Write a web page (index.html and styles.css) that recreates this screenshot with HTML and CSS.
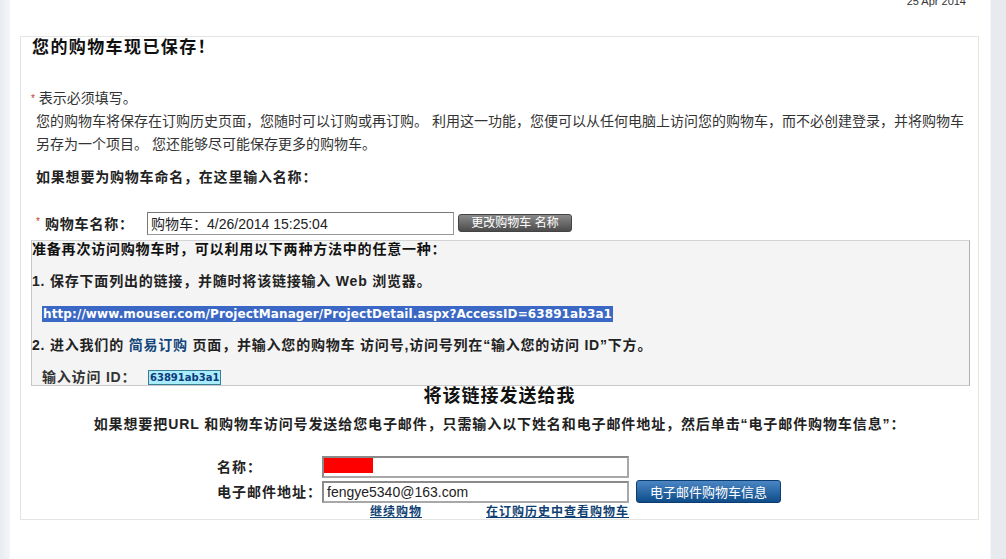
FILE: index.html
```html
<!DOCTYPE html>
<html lang="zh-CN">
<head>
    <meta charset="UTF-8">
    <title>购物车已保存</title>
    <link rel="stylesheet" href="styles.css">
</head>
<body>
    <div class="rail-left"></div>

    <div class="page">
        <div class="topbar">25 Apr 2014</div>

        <div class="box">
            <h2 class="title">您的购物车现已保存！</h2>

            <p class="required"><span class="star">*</span> 表示必须填写。</p>
            <p class="intro">您的购物车将保存在订购历史页面，您随时可以订购或再订购。 利用这一功能，您便可以从任何电脑上访问您的购物车，而不必创建登录，并将购物车另存为一个项目。 您还能够尽可能保存更多的购物车。</p>

            <p class="name-hint">如果想要为购物车命名，在这里输入名称：</p>

            <div class="name-row">
                <span class="star">*</span>
                <label class="name-label" for="cart-name">购物车名称：</label>
                <input type="text" id="cart-name" class="name-input" value="购物车：4/26/2014 15:25:04">
                <button class="rename-btn">更改购物车 名称</button>
            </div>

            <div class="access">
                <p class="lead">准备再次访问购物车时，可以利用以下两种方法中的任意一种：</p>
                <p class="step step1">1. 保存下面列出的链接，并随时将该链接输入 Web 浏览器。</p>
                <p class="url-line"><span class="url">http://www.mouser.com/ProjectManager/ProjectDetail.aspx?AccessID=63891ab3a1</span></p>
                <p class="step">2. 进入我们的 <a href="#" class="quick">简易订购</a> 页面，并输入您的购物车 访问号,访问号列在“输入您的访问 ID”下方。</p>
                <div class="id-row">
                    <span class="id-label">输入访问 ID：</span>
                    <span class="access-id">63891ab3a1</span>
                </div>
            </div>

            <h3 class="send-title">将该链接发送给我</h3>
            <p class="send-hint">如果想要把URL 和购物车访问号发送给您电子邮件，只需输入以下姓名和电子邮件地址，然后单击“电子邮件购物车信息”：</p>

            <form class="mail-form">
                <label class="mail-label" for="mail-name">名称：</label>
                <input type="text" id="mail-name" class="mail-input redacted">
                <span></span>

                <label class="mail-label" for="mail-addr">电子邮件地址：</label>
                <input type="text" id="mail-addr" class="mail-input" value="fengye5340@163.com">
                <button type="button" class="mail-btn">电子邮件购物车信息</button>

                <span></span>
                <div class="links">
                    <a href="#">继续购物</a>
                    <a href="#">在订购历史中查看购物车</a>
                </div>
            </form>
        </div>
    </div>

    <div class="rail-right"></div>
</body>
</html>
```

FILE: styles.css
```css
body{
    margin: 0;
    display: flex;
    height: 559px;
    overflow: hidden;
    background-color: white;
    font-family: "Liberation Sans", "Noto Sans CJK SC", sans-serif;
    font-size: 14px;
    color: #222;
}
.rail-left{
    width: 10px;
    background: linear-gradient(to right, #e8ecf1, #f4f6f9);
}
.rail-right{
    width: 16px;
    box-sizing: border-box;
    background-color: #e8eaf0;
    border-left: 1px solid #f5f6f9;
}
.page{
    flex: 1;
    padding: 0 11px 0 10px;
}
.topbar{
    height: 36px;
    padding-right: 13px;
    text-align: right;
    font-size: 11px;
    line-height: 2px;
    color: #333;
}
.box{
    border: 1px solid #e4e4e4;
}
p{
    margin: 0;
}
.title{
    margin: 0;
    padding-left: 11px;
    font-size: 17px;
    line-height: 22px;
    letter-spacing: 1.4px;
    color: #111;
}
.star{
    color: #c0392b;
    font-size: 10px;
    vertical-align: top;
}
.required{
    margin: 28px 0 0 10px;
    line-height: 23px;
    color: #333;
}
.intro{
    margin: 0 10px 0 15px;
    line-height: 23px;
    color: #333;
}
.name-hint{
    margin: 10px 0 0 15px;
    line-height: 23px;
    font-weight: bold;
    letter-spacing: 0.8px;
}
.name-row{
    margin: 22px 0 0 15px;
    height: 24px;
    display: flex;
    align-items: center;
}
.name-row .star{
    width: 9px;
    line-height: 10px;
    margin-bottom: 3px;
}
.name-label{
    width: 102px;
    font-weight: bold;
    letter-spacing: 0.8px;
}
.name-input{
    width: 307px;
    height: 23px;
    box-sizing: border-box;
    border: 1px solid #999;
    border-top-color: #777;
    border-left-color: #777;
    padding: 0 3px;
    font-family: "Liberation Sans", "Noto Sans CJK SC", sans-serif;
    font-size: 14px;
    color: #222;
}
.rename-btn{
    margin-left: 4px;
    width: 114px;
    height: 18px;
    padding: 0;
    border: 1px solid #444;
    border-radius: 3px;
    background: linear-gradient(#8a8a8a, #4c4c4c);
    color: white;
    font-family: "Liberation Sans", "Noto Sans CJK SC", sans-serif;
    font-size: 12px;
    line-height: 16px;
}
.access{
    margin: 5px 8px 0 10px;
    background-color: #f4f4f4;
    border: 1px solid #c8c8c8;
    border-top-color: #d4d4d4;
    border-right-color: #b0b0b0;
    font-weight: bold;
    letter-spacing: 0.8px;
    color: #222;
}
.lead{
    line-height: 16px;
    color: #111;
}
.step{
    line-height: 32px;
}
.step1{
    margin-top: 8px;
}
.url-line{
    line-height: 32px;
    padding-left: 10px;
    letter-spacing: 0;
}
.url{
    display: inline-block;
    line-height: 16px;
    padding: 0 1px;
    background-color: #3a68c4;
    color: white;
    font-family: "DejaVu Sans", sans-serif;
    font-size: 12px;
    letter-spacing: 0.1px;
}
.quick{
    color: #12457a;
    text-decoration: none;
}
.id-row{
    padding: 8px 0 0 10px;
    line-height: 16px;
    display: flex;
    align-items: center;
}
.id-label{
    width: 106px;
    color: #333;
}
.access-id{
    height: 15px;
    box-sizing: border-box;
    padding: 0 1px;
    background-color: #a9ecfb;
    border: 1px solid #3a7c95;
    color: #0d3b7c;
    font-family: "DejaVu Sans", sans-serif;
    font-size: 10px;
    line-height: 13px;
    letter-spacing: 0;
}
.send-title{
    margin: 0;
    text-align: center;
    font-size: 18px;
    line-height: 20px;
    letter-spacing: 1px;
    color: #111;
}
.send-hint{
    margin-top: 8px;
    text-align: center;
    line-height: 20px;
    font-weight: bold;
    letter-spacing: 0.9px;
}
.mail-form{
    margin: 22px 0 0 0;
    padding-left: 196px;
    display: grid;
    grid-template-columns: 105px 307px auto;
    row-gap: 2px;
    align-items: center;
}
.mail-label{
    font-weight: bold;
    letter-spacing: 1px;
    line-height: 20px;
}
.mail-input{
    width: 307px;
    height: 22px;
    box-sizing: border-box;
    border: 2px solid #8a8a8a;
    border-right-color: #a8a8a8;
    border-bottom-color: #a8a8a8;
    padding: 0 3px;
    font-family: "Liberation Sans", "Noto Sans CJK SC", sans-serif;
    font-size: 14px;
    color: #222;
}
.redacted{
    background: linear-gradient(#ff0000, #ff0000) no-repeat 0 0 / 49px 15px;
}
.mail-btn{
    justify-self: start;
    margin-left: 7px;
    width: 145px;
    height: 23px;
    padding: 0;
    border: 1px solid #0b3d70;
    border-radius: 3px;
    background: linear-gradient(#4a86c4, #0f4c8a);
    color: white;
    font-family: "Liberation Sans", "Noto Sans CJK SC", sans-serif;
    font-size: 13px;
}
.links{
    display: flex;
    justify-content: space-between;
    padding-left: 48px;
    line-height: 14px;
}
.links a{
    color: #0f3f72;
    font-size: 12px;
    font-weight: bold;
    letter-spacing: 1px;
}
```
